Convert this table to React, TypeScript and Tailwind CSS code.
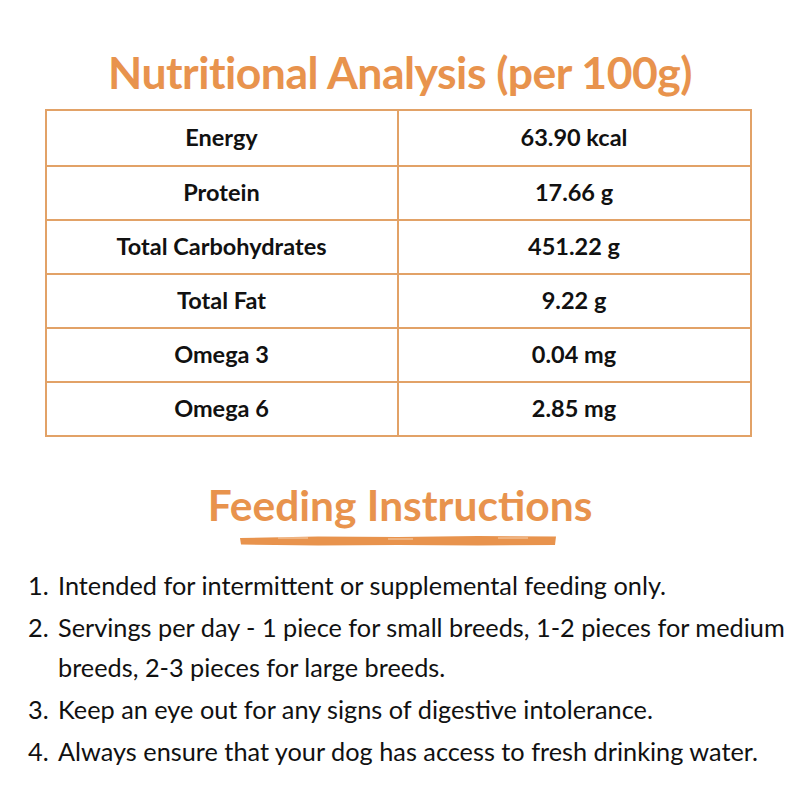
import React from "react";

const rows: [string, string][] = [
  ["Energy", "63.90 kcal"],
  ["Protein", "17.66 g"],
  ["Total Carbohydrates", "451.22 g"],
  ["Total Fat", "9.22 g"],
  ["Omega 3", "0.04 mg"],
  ["Omega 6", "2.85 mg"],
];

const items = [
  "Intended for intermittent or supplemental feeding only.",
  "Servings per day - 1 piece for small breeds, 1-2 pieces for medium breeds, 2-3 pieces for large breeds.",
  "Keep an eye out for any signs of digestive intolerance.",
  "Always ensure that your dog has access to fresh drinking water.",
];

export default function App() {
  return (
    <div className="w-[800px] h-[800px] bg-white flex flex-col items-center" style={{ fontFamily: "Lato, 'Open Sans', sans-serif" }}>
      <h1 className="mt-[46px] text-[44.5px] leading-[52px] font-bold text-[#e8934d] tracking-[-0.5px]">
        Nutritional Analysis (per 100g)
      </h1>
      <div className="mt-[11px] w-[707px] ml-[-4px] border-2 border-[#e2a267]">
        {rows.map(([k, v], i) => (
          <div key={k} className={`grid grid-cols-[352px_1fr] h-[54px] ${i > 0 ? "border-t-2 border-[#e2a267]" : ""}`}>
            <div className="flex items-center justify-center border-r-2 border-[#e2a267] text-[23.5px] font-bold text-[#111]">{k}</div>
            <div className="flex items-center justify-center text-[23.5px] font-bold text-[#111]">{v}</div>
          </div>
        ))}
      </div>
      <h2 className="mt-[42px] text-[42.5px] leading-[52px] font-bold text-[#e8934d]">Feeding Instructions</h2>
      <svg width="320" height="16" viewBox="0 0 320 16" className="mt-[2px] ml-[-4px]">
        <path d="M2 5 L80 3.5 L160 4 L240 3 L318 3.5 L317 12 L240 12.5 L160 12 L80 12.5 L3 11.5 Z" fill="#e8934d" />
        <path d="M40 5 L70 5 M150 6 L175 6 M260 5 L290 5" stroke="#f6d3b4" strokeWidth="1" />
      </svg>
      <ol className="mt-[16px] w-full pl-[28px] pr-[4px] text-[25.3px] text-[#111] leading-[40px]">
        {items.map((t, i) => (
          <li key={i} className="flex mb-[2px]">
            <span className="w-[30px] shrink-0">{i + 1}.</span>
            <span>{t}</span>
          </li>
        ))}
      </ol>
    </div>
  );
}
